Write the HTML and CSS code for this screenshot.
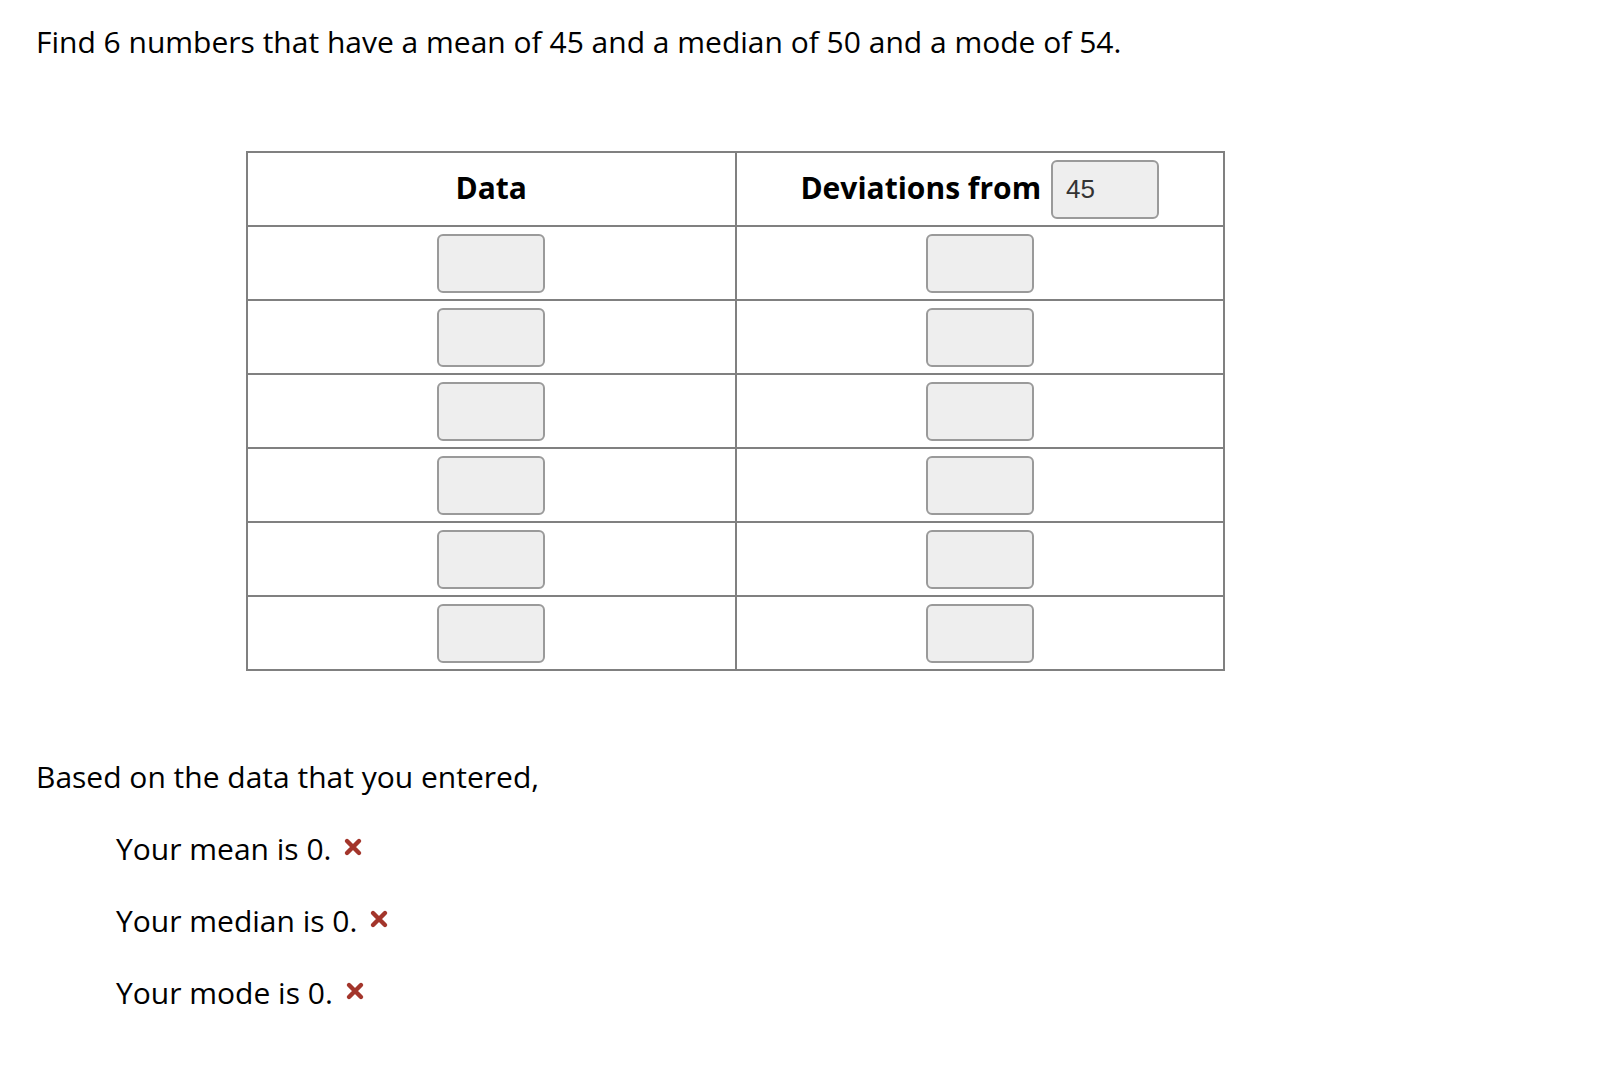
FILE: index.html
```html
<!DOCTYPE html>
<html lang="en">
<head>
<meta charset="utf-8">
<title>Mean, median and mode</title>
<link rel="stylesheet" href="styles.css">
</head>
<body>
<main class="page">
  <p class="prompt">Find 6 numbers that have a mean of 45 and a median of 50 and a mode of 54.</p>

  <table class="grid">
    <thead>
      <tr>
        <th><span class="head">Data</span></th>
        <th><span class="dev"><span class="head">Deviations from</span> <input class="box box-value" type="text" value="45"></span></th>
      </tr>
    </thead>
    <tbody>
      <tr><td><input class="box" type="text"></td><td><input class="box" type="text"></td></tr>
      <tr><td><input class="box" type="text"></td><td><input class="box" type="text"></td></tr>
      <tr><td><input class="box" type="text"></td><td><input class="box" type="text"></td></tr>
      <tr><td><input class="box" type="text"></td><td><input class="box" type="text"></td></tr>
      <tr><td><input class="box" type="text"></td><td><input class="box" type="text"></td></tr>
      <tr><td><input class="box" type="text"></td><td><input class="box" type="text"></td></tr>
    </tbody>
  </table>

  <section class="results">
    <p class="lead">Based on the data that you entered,</p>
    <p class="line">Your mean is 0. <svg class="wrong" viewBox="0 0 20 20" aria-label="incorrect"><path d="M4 4 L16 16 M16 4 L4 16"/></svg></p>
    <p class="line">Your median is 0. <svg class="wrong" viewBox="0 0 20 20" aria-label="incorrect"><path d="M4 4 L16 16 M16 4 L4 16"/></svg></p>
    <p class="line">Your mode is 0. <svg class="wrong" viewBox="0 0 20 20" aria-label="incorrect"><path d="M4 4 L16 16 M16 4 L4 16"/></svg></p>
  </section>
</main>
</body>
</html>
```

FILE: styles.css
```css
html, body {
  margin: 0;
  padding: 0;
  background: #ffffff;
}

body {
  font-family: "Open Sans", "Liberation Sans", sans-serif;
  color: #000000;
}

.page {
  padding: 21px 0 0 36px;
}

.prompt {
  margin: 0;
  font-size: 30px;
  line-height: 42px;
}

.grid {
  margin: 88px 0 0 210px;
  width: 979px;
  border-collapse: collapse;
  table-layout: fixed;
}

.grid th,
.grid td {
  border: 2px solid #808080;
  text-align: center;
  vertical-align: middle;
  padding: 0;
  height: 72px;
}

.grid th {
  font-size: 30px;
  font-weight: 700;
  line-height: 40px;
}

.head {
  display: inline-block;
  margin-bottom: 3px;
}

.dev {
  display: inline-flex;
  align-items: center;
  gap: 10px;
}

.box {
  box-sizing: border-box;
  width: 108px;
  height: 59px;
  border: 2px solid #9a9a9a;
  border-radius: 6px;
  background: #eeeeee;
  margin: 0;
  padding: 0 13px;
  font-family: "Liberation Sans", Arial, sans-serif;
  font-size: 26px;
  color: #333333;
  vertical-align: middle;
  display: inline-block;
}

.results {
  margin-top: 85px;
  display: flex;
  flex-direction: column;
  gap: 30px;
}

.results p {
  margin: 0;
  font-size: 30px;
  line-height: 42px;
}

.line {
  padding-left: 80px;
}

.wrong {
  width: 20px;
  height: 20px;
  margin-left: 4px;
  vertical-align: 3px;
  fill: none;
  stroke: #a3352b;
  stroke-width: 4.4;
  stroke-linecap: round;
}
```
